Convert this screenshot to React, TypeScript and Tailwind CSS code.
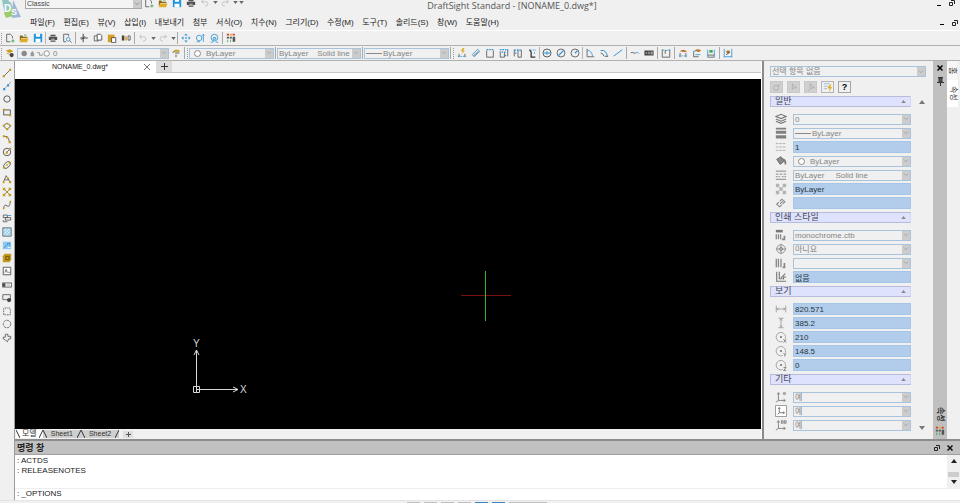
import type { ReactNode } from "react";

const INK = "#555555";
const BLUE = "#2f95d6";
const GOLD = "#c69a1c";

const glyphs: Record<string, ReactNode> = {
  new: <><path d="M2 1.500h4.500L9 4v2.500M2 1.500v9h4.500" stroke={INK} /><path d="M9.500 7.500v4M7.500 9.500h4" stroke="#3aa655" /></>,
  open: <><path d="M1 3h3l1 1.500h5V6H3l-2 4.500z" fill="#8a6a12" stroke="none" /><path d="M3 6.500h8.500L9.500 11H1z" fill="#e0aa22" stroke="none" /><path d="M6 2.500h3" stroke="#3aa655" /></>,
  save: <><path d="M1 1h10v10H1z" fill="#1e96dd" stroke="none" /><path d="M3.500 1h5v3.500h-5zM3 7h6v4H3z" fill="#fff" stroke="none" /></>,
  print: <><path d="M3 2h6v2H3zM1 4.500h10v4H1zM3 9h6v1.500H3z" fill="#505050" stroke="none" /><path d="M4 7.500h4" stroke="#ddd" /></>,
  preview: <><path d="M2 1.500h6V4M2 1.500v9h3" stroke={INK} /><circle cx="7.500" cy="7.500" r="2.200" stroke={BLUE} /><path d="M9 9l2.500 2.500" stroke={INK} /></>,
  cut: <path d="M5 1v10M1.500 6h9M7 4L3 8" stroke="#444" strokeWidth="1.200" />,
  copy: <><path d="M1.500 3.500h5v6h-5z" stroke={INK} /><path d="M5 1.500h4L10.500 3v5.500H5z" stroke="#444" fill="#fff" /></>,
  paste: <><path d="M1 2h8v9H1z" fill="#d89f1f" stroke="none" /><path d="M5.500 5.500h5v6h-5z" stroke="#444" fill="#fff" /></>,
  props: <><path d="M1 3h3v6H1z" fill="#444" stroke="none" /><path d="M5 4h2v5H5z" fill="#e0a020" stroke="none" /><path d="M8.500 3.500h2.500v5H8.500z" stroke={INK} /></>,
  undo: <path d="M4 2L2 4.500 4.500 7M2 4.500h5a2.500 2.500 0 010 5H6" stroke="#bdbdbd" />,
  redo: <path d="M8 2l2 2.500L7.500 7M10 4.500H5a2.500 2.500 0 000 5h1" stroke="#bdbdbd" />,
  pan: <path d="M6 .5L8 3H4zM6 11.500L4 9h4zM.5 6L3 4v4zM11.500 6L9 8V4zM5 5h2v2H5z" fill={BLUE} stroke="none" />,
  zoomDyn: <><circle cx="5" cy="6" r="3.300" stroke={BLUE} /><path d="M10 1.500v9M8.500 3L10 1.500 11.500 3M2 10.500h4" stroke={BLUE} /></>,
  zoomWin: <><circle cx="6.500" cy="5.500" r="4" stroke={BLUE} /><path d="M5 5.500h3v2H5zM2 11h2l2-1.500M8 11h3" stroke={BLUE} /></>,
  palette: <><path d="M1 1h2.500v2H1zM8 1h2.500v2H8z" fill="#d23c2c" stroke="none" /><path d="M4.500 1H7v2H4.500z" fill="#e0aa22" stroke="none" /><path d="M1 4.500h2.500v2H1zM4.500 4.500H7v2H4.500zM8 4.500h3v6H8z" fill={INK} stroke="none" /><path d="M2 8v3M5.500 8v3" stroke="#3aa655" /></>,
  layers: <><path d="M1 3l5-1.500L10 4 5 6z" fill={GOLD} stroke="none" /><path d="M2 6l4 2" stroke={GOLD} /><circle cx="8" cy="8.500" r="2.500" fill="#444" stroke="none" /></>,
  layerPrev: <><path d="M2 4.500h9L9 2H5z" fill={GOLD} stroke="none" /><path d="M5 6h5M6 8v3M2 6l2-2" stroke="#444" /></>,
  dimSmart: <><path d="M7 0L4.500 4H7L5.500 7.500 9.500 3H7.500L9 0z" fill="#e0aa22" stroke="none" /><path d="M2.500 7v4M9.500 7v4" stroke={INK} /><path d="M1 10h10" stroke={BLUE} strokeDasharray="2 1" /></>,
  dimAligned: <><path d="M1.500 8L8 1.500 10.500 4 4 10.500z" stroke={BLUE} /><path d="M3 9.500L9 4" stroke={INK} /></>,
  dimLinear: <><path d="M2 3v8h8V3" stroke={INK} /><path d="M2 2h8" stroke={BLUE} strokeWidth="1.500" strokeDasharray="2 1" /></>,
  dimBase: <><path d="M1.500 4v7h5V5M10.500 2v8" stroke={INK} /><path d="M1 2h10M3 5h5M8 8v3" stroke={BLUE} strokeWidth="1.500" strokeDasharray="2 1" /></>,
  dimCont: <><path d="M1.500 2v8M6 2v9h4V2" stroke={INK} /><path d="M1.500 2.500h9M2 6h3" stroke={BLUE} strokeWidth="1.500" strokeDasharray="2 1" /></>,
  dimOrd: <><path d="M3 2l2 3v6h5" stroke="#333" strokeWidth="1.500" /><path d="M4 2.500h7M9 5v3" stroke={BLUE} strokeDasharray="2 1" /></>,
  diameterH: <><circle cx="6" cy="6" r="4.800" stroke="#444" /><path d="M2 6h8M6 4v4" stroke={BLUE} strokeWidth="1.300" /></>,
  diameter: <><circle cx="6" cy="6" r="4.800" stroke={INK} /><path d="M3 9l6-6" stroke={BLUE} strokeWidth="1.300" /></>,
  radius: <><circle cx="6" cy="6" r="4.800" stroke={INK} /><path d="M6 6l3-3M6 6h1.500" stroke={BLUE} strokeWidth="1.300" /></>,
  angle: <><path d="M2.500 1v9.500H11" stroke={INK} /><path d="M3 2.500q5 1 6 7" stroke={BLUE} /></>,
  arc: <><path d="M2 3q7-1 8 7" stroke={BLUE} strokeWidth="1.200" /><path d="M2 6q3 0 4 4M7 10h4" stroke={INK} /></>,
  jog: <path d="M1 9.500L4.500 7 6 6l5-4" stroke={BLUE} strokeWidth="1.200" />,
  wave: <><path d="M1 6q1.500-2 3 0h3" stroke={INK} /><path d="M7 6l2-1 2 2" stroke={BLUE} /></>,
  tol: <><path d="M.5 3h11v6H.5z" fill="#444" stroke="none" /><path d="M2 6h2M6 4.500v3M8 5h2.500M8 7h2.500" stroke="#eee" /></>,
  center: <><path d="M1.500 2v9h9V2M5 7V3h2" stroke={INK} /><path d="M1 2.500h3M8 2.500h3" stroke={BLUE} /></>,
  dimEdit: <><path d="M2 4q4-4 9 0L8 5z" fill="#b97a34" stroke="none" /><path d="M2.500 6v5M9.500 6v5" stroke={INK} /><path d="M1 9.500h10" stroke={BLUE} strokeDasharray="2 1" /></>,
  dimText: <><path d="M3 3q4-3 8 0L8 5z" fill="#b97a34" stroke="none" /><path d="M2 5v5.500h6" stroke={INK} /><path d="M1 4h3M4 8h6" stroke={BLUE} /></>,
  dimUpdate: <><path d="M2 2v9M10 2v9" stroke={BLUE} /><path d="M4 2.500h4v3H4z" fill="#3aa655" stroke="none" /><path d="M2 8.500h8M2 11h8" stroke={INK} /></>,
  dimStyle: <><path d="M1.500 1v10M10.500 1v10M1 10.500h10" stroke={BLUE} /><path d="M4 3h4v3H4z" fill="#b97a34" stroke="none" /><path d="M4 8l4-3" stroke="#222" /></>,
  line: <><path d="M2.500 9.500l7-7" stroke={INK} /><path d="M1 8.500h2.500V11H1zM8.500 1H11v2.500H8.500z" fill={GOLD} stroke="none" /></>,
  ray: <><path d="M1 11L11 1" stroke="#999" /><path d="M1.500 8.500H4V11H1.500zM6 4h2.500v2.500H6z" fill={BLUE} stroke="none" /></>,
  circle: <circle cx="6" cy="6" r="3.800" stroke="#444" />,
  rect: <><path d="M2 3.500h8v6H2z" stroke="#444" /><path d="M1 2h2.500v2.500H1zM8.500 8.500H11V11H8.500z" fill={GOLD} stroke="none" /></>,
  arcTool: <><path d="M1.500 6q4.500-6 9 0L6 10z" stroke={INK} /><path d="M1 4.500h2.500V7H1zM8.500 4.500H11V7H8.500zM5 8.500h2.500V11H5zM5 2h2v2H5z" fill={GOLD} stroke="none" /></>,
  poly: <><path d="M2 3h4l2 3 1 4" stroke={INK} /><path d="M1 1.500h2.500V4H1zM5 3h2.500v2.500H5zM8 8.500h2.500V11H8z" fill={GOLD} stroke="none" /></>,
  circleR: <><circle cx="6" cy="6" r="4.500" stroke="#444" /><path d="M5 7l4-4" stroke={INK} /><path d="M4.500 5.500H7V8H4.500zM9 1h2v2H9z" fill={GOLD} stroke="none" /></>,
  ellipse: <><ellipse cx="6" cy="6" rx="5" ry="3" transform="rotate(-45 6 6)" stroke={INK} /><path d="M1.500 8H4v2.500H1.500zM8 2h2.500v2.500H8zM5 5h2v2H5z" fill={GOLD} stroke="none" /></>,
  spline: <><path d="M1.500 10L5 2l5 8M3.500 7h5" stroke={INK} /><path d="M1 8.500h2V11H1zM6 4h2v2H6zM8.500 8.500H11V11H8.500z" fill={GOLD} stroke="none" /></>,
  points: <><path d="M2 2l8 8M10 2l-8 8" stroke="#8c7a35" /><path d="M1 1h3v3H1zM8 1h3v3H8zM1 8h3v3H1zM8 8h3v3H8z" fill={GOLD} stroke="none" /></>,
  sketch: <><path d="M2 10q1-6 4-3t4-5" stroke={INK} /><path d="M1 9h2v2H1zM9 1h2v2H9z" fill={GOLD} stroke="none" /></>,
  table: <><path d="M1.500 2.500h5v3h-5zM4 5.500h6.500v3H4zM1.500 8.500v2h5" stroke={INK} /><path d="M7 3h4" stroke={BLUE} /></>,
  hatch: <><path d="M1 1h10v10H1z" fill="#cfe8f5" stroke="#4a5a66" /><path d="M1 4l3-3M1 8l7-7M2 11l9-9M6 11l5-5" stroke="#7fb8d6" /></>,
  gradient: <><path d="M1 2h10v9H1z" fill="#8cc8ee" stroke="none" /><path d="M2 10l6-6M6 4h3v3" stroke={BLUE} /><path d="M7 9h3" stroke="#fff" /></>,
  region: <><path d="M3 1h8v7l-2 3H1V4z" fill={GOLD} stroke="none" /><path d="M4.500 4h4v4h-4z" stroke="#5e4808" /></>,
  note: <><path d="M1.500 1.500h9v9h-9z" stroke="#444" fill="#fff" /><path d="M3.500 8L5 4l1.500 4M7.500 7.500h2" stroke={INK} /></>,
  text: <><path d="M.5 3.500h11v5H.5z" stroke={INK} /><path d="M1 4h3v4H1z" fill="#444" stroke="none" /><path d="M5.500 6h4" stroke="#aaa" /></>,
  block: <><path d="M1 2h9v6H1z" stroke={INK} /><circle cx="8.500" cy="8.500" r="2.500" fill="#444" stroke="none" /></>,
  mask: <path d="M2 10.500V3l1.500-1L5 3l1-1 1 1 1.500-1L10 3v7.500z" stroke="#555" strokeDasharray="2 1" />,
  ring: <circle cx="6" cy="6" r="4.500" stroke={INK} strokeDasharray="3 1" />,
  cloud: <path d="M4 1.500h3v2.500h3.500v3H8L6.500 10.500 4 8.500 1.500 7V5H4z" stroke={INK} />,
};

const propIcons: Record<string, ReactNode> = {
  layer: <path d="M1 4l6-2.500L13 4 7 6.500zM1 7l6 2.500L13 7M1 9.500L7 12l6-2.500" stroke="#777" strokeWidth="1.300" />,
  weight: <path d="M1 1h12v2H1zM1 4.500h12V8H1zM1 9.500h12v4H1z" fill="#808080" stroke="none" />,
  scale: <path d="M1 3h12M1 7h12M1 11h12" stroke="#a8a8a8" strokeDasharray="3 1" />,
  color: <><path d="M2 5l5-3 4 5-5 4z" fill="#8a8a8a" stroke="#666" /><path d="M9 5q4 1 3 6" stroke="#777" strokeWidth="2" /></>,
  style: <path d="M1 2.500h12M1 6h3M5.500 6h3M10 6h3M1 9h2M4 9h2M8 9h2M11 9h2M1 12h12" stroke="#777" />,
  trans: <path d="M1 1h4v4H1zM9 1h4v4H9zM5 5h4v4H5zM1 9h4v4H1zM9 9h4v4H9z" fill="#b4b4b4" stroke="none" />,
  link: <path d="M6 8L9 5M5.500 5L8 2.500l3.500 3L9 8M8 9l-2.500 2.500-3.500-3L4.500 6" stroke="#8a8a8a" strokeWidth="1.300" />,
  plotStyle: <><path d="M1 1h8v3H1z" fill="#777" stroke="none" /><path d="M1.500 6v6M4 6v6M6.500 6v6" stroke="#888" strokeWidth="1.500" /><path d="M11 8v4H8" stroke="#888" strokeWidth="2" /></>,
  plotTarget: <><circle cx="7" cy="7" r="5" stroke="#888" /><path d="M1 7h12M7 1v12" stroke="#888" /><circle cx="7" cy="7" r="2" stroke="#888" /></>,
  plotTable: <><path d="M1.500 2v10M4 2v10M7 2v10" stroke="#888" strokeWidth="1.500" /><path d="M11 7v5H9" stroke="#888" strokeWidth="2" /></>,
  plotSpace: <path d="M2 1v11h11M5 1v8h4M7 8l5-5M10 10v-3h3" stroke="#777" strokeWidth="1.300" />,
  width: <path d="M1.500 3v8M12.500 3v8M2 7h10M4 5.500L2.500 7 4 8.500M10 5.500L11.500 7 10 8.500" stroke="#999" />,
  height: <path d="M4 1.500h6M4 12.500h6M7 2v10M5.500 4L7 2.500 8.500 4M5.500 10L7 11.500 8.500 10" stroke="#999" />,
  centerX: <><path d="M12 9a5.500 5.500 0 10-3 3.200" stroke="#999" /><circle cx="7" cy="7" r="1.300" fill="#777" stroke="none" /><path d="M10 9.500l3 4M13 9.500l-3 4" stroke="#777" /></>,
  centerY: <><path d="M12 9a5.500 5.500 0 10-3 3.200" stroke="#999" /><circle cx="7" cy="7" r="1.300" fill="#777" stroke="none" /><path d="M10 9.500l1.500 2 1.500-2M11.500 11v2.500" stroke="#777" /></>,
  centerZ: <><path d="M12 9a5.500 5.500 0 10-3 3.200" stroke="#999" /><circle cx="7" cy="7" r="1.300" fill="#777" stroke="none" /><path d="M10 10h3l-3 3.500h3" stroke="#777" /></>,
  ucsIcon: <><path d="M4 2v9h8M2.500 4L4 2l1.500 2M10 9.500l2 1.500-2 1.500M4 11l-3 2" stroke="#777" /><circle cx="11" cy="3" r="2" fill="#aaa" stroke="none" /></>,
  ucsView: <><path d="M.5.5h13v13H.5z" stroke="#888" fill="#fff" /><path d="M5 3v6h6M4 4.500L5 3l1 1.500M9.500 8L11 9l-1.500 1M5 9l-2 2" stroke="#666" /></>,
  ucsOrigin: <path d="M4 2v9h8M2.500 4L4 2l1.500 2M10 9.500l2 1.500-2 1.500M4 11l-3 2M7.500 2h2v3h-2zM11 2h2v3h-2z" stroke="#777" />,
};

const menus = ["파일(F)", "편집(E)", "뷰(V)", "삽입(I)", "내보내기", "첨부", "서식(O)", "치수(N)", "그리기(D)", "수정(M)", "도구(T)", "솔리드(S)", "창(W)", "도움말(H)"];

const drawTools = ["line", "ray", "circle", "rect", "arcTool", "poly", "circleR", "ellipse", "spline", "points", "sketch", "table", "hatch", "gradient", "region", "note", "text", "block", "mask", "ring", "cloud"];

type Row = { icon: string; label: string; value: string; kind: "select" | "input"; swatch?: "line" | "dot" };

const sections: { title: string; rows: Row[] }[] = [
  {
    title: "일반",
    rows: [
      { icon: "layer", label: "도면층", value: "0", kind: "select" },
      { icon: "weight", label: "선가중치", value: "ByLayer", kind: "select", swatch: "line" },
      { icon: "scale", label: "선 축척", value: "1", kind: "input" },
      { icon: "color", label: "선 색상", value: "ByLayer", kind: "select", swatch: "dot" },
      { icon: "style", label: "선 스타일", value: "ByLayer\u00a0\u00a0\u00a0\u00a0\u00a0Solid line", kind: "select" },
      { icon: "trans", label: "투명도", value: "ByLayer", kind: "input" },
      { icon: "link", label: "하이퍼링크", value: "", kind: "input" },
    ],
  },
  {
    title: "인쇄 스타일",
    rows: [
      { icon: "plotStyle", label: "인쇄 스타일 테이블", value: "monochrome.ctb", kind: "select" },
      { icon: "plotTarget", label: "인쇄 스타일", value: "아니요", kind: "select" },
      { icon: "plotTable", label: "테이블 유형", value: "", kind: "select" },
      { icon: "plotSpace", label: "테이블 연결", value: "없음", kind: "input" },
    ],
  },
  {
    title: "보기",
    rows: [
      { icon: "width", label: "너비", value: "820.571", kind: "input" },
      { icon: "height", label: "높이", value: "385.2", kind: "input" },
      { icon: "centerX", label: "중심 X", value: "210", kind: "input" },
      { icon: "centerY", label: "중심 Y", value: "148.5", kind: "input" },
      { icon: "centerZ", label: "중심 Z", value: "0", kind: "input" },
    ],
  },
  {
    title: "기타",
    rows: [
      { icon: "ucsIcon", label: "좌표계 아이콘", value: "예", kind: "select" },
      { icon: "ucsView", label: "뷰별 좌표계", value: "예", kind: "select" },
      { icon: "ucsOrigin", label: "원점에 표시", value: "예", kind: "select" },
    ],
  },
];

function Tool({ name }: { name: string }) {
  return (
    <button type="button" aria-label={name} className="flex h-[13px] w-[14px] shrink-0 items-center justify-center">
      <svg viewBox="0 0 12 12" fill="none" className="h-[10px] w-[10px]">{glyphs[name]}</svg>
    </button>
  );
}

function Tools({ names }: { names: string[] }) {
  return <>{names.map((n) => <Tool key={n} name={n} />)}</>;
}

function More() {
  return (
    <button type="button" aria-label="more" className="flex w-[6px] shrink-0 justify-center">
      <svg viewBox="0 0 6 4" className="h-[3px] w-[5px]"><path d="M0 0h6L3 4z" fill="#666" /></svg>
    </button>
  );
}

function Sep({ tight }: { tight?: boolean }) {
  return <span className={tight ? "h-3 w-px shrink-0 bg-[#b5b5b5]" : "mx-px h-3 w-px shrink-0 bg-[#a8a8a8]"} />;
}

function Grip() {
  return <span className="mx-px h-[11px] shrink-0 border-l border-dotted border-[#999999]" />;
}

function Combo({ label, value, swatch, className = "" }: { label: string; value: string; swatch?: ReactNode; className?: string }) {
  return (
    <label className={`flex h-[11px] items-center border border-[#a9c3dc] bg-[#f0f0f0] ${className}`}>
      {swatch}
      <select disabled aria-label={label} className="h-full min-w-0 flex-1 appearance-none bg-transparent px-px text-[8px] leading-[9px] text-[#858585] opacity-100">
        <option>{value}</option>
      </select>
      <span className="flex h-full w-2 shrink-0 items-center justify-center bg-[#cccccc]">
        <svg viewBox="0 0 8 6" className="h-1 w-[6px]"><path d="M1 1l3 3 3-3" fill="none" stroke="#999" /></svg>
      </span>
    </label>
  );
}

const lineSwatch = <span className="ml-px h-px w-4 shrink-0 bg-[#8a8a8a]" />;
const dotSwatch = <span className="mx-1 h-[7px] w-[7px] shrink-0 rounded-full border border-[#8a8a8a] bg-white" />;

function PropRow({ row }: { row: Row }) {
  return (
    <div className="flex h-[14px] items-center">
      <svg viewBox="0 0 14 14" fill="none" className="mr-[6px] ml-[5px] h-3 w-3 shrink-0">{propIcons[row.icon]}</svg>
      {row.kind === "select" ? (
        <Combo label={row.label} value={row.value} className="min-w-0 flex-1"
          swatch={row.swatch === "line" ? lineSwatch : row.swatch === "dot" ? dotSwatch : undefined} />
      ) : (
        <input aria-label={row.label} defaultValue={row.value}
          className="h-3 min-w-0 flex-1 border border-[#a5c6e6] bg-[#b1cdeb] px-px text-[8px] leading-[10px] text-[#2b3540] outline-none" />
      )}
    </div>
  );
}

function WindowControls() {
  return (
    <div className="flex w-[18px] shrink-0 items-center justify-between">
      <button type="button" aria-label="최소화" className="mt-1 h-px w-1 bg-black" />
      <button type="button" aria-label="복원"><RestoreIcon /></button>
    </div>
  );
}

function RestoreIcon() {
  return (
    <svg viewBox="0 0 6 6" className="h-[6px] w-[6px]">
      <path d="M2 .5h3.500V4M.5 2.500h3v3h-3z" fill="none" stroke="#222" />
    </svg>
  );
}

function TitleBar() {
  return (
    <header className="relative flex h-[13px] items-start pl-[25px]">
      <svg viewBox="0 0 20 20" className="absolute top-0 left-px h-5 w-5">
        <path d="M1 0l6 0q6 4 5 16L4 15z" fill="#8fc6c4" />
        <path d="M12 0l8 17-9 1z" fill="#9cb8d8" />
        <path d="M3 13l8-6 1 9-7 2z" fill="#9ccb6b" />
        <text x="3" y="12" fontSize="10" fontWeight="bold" fill="#ffffff" fontFamily="Liberation Sans">D</text>
        <text x="10" y="15" fontSize="9" fontWeight="bold" fill="#ffffff" fontFamily="Liberation Sans">S</text>
      </svg>
      <label className="flex h-[9px] w-[117px] items-center border border-t-0 border-[#a8a8a8] bg-[#f4f4f4]">
        <select aria-label="작업 공간" className="h-2 min-w-0 flex-1 appearance-none px-px text-[7px] leading-[8px] text-[#444444]">
          <option>Classic</option>
        </select>
        <span className="flex h-full w-2 items-center justify-center bg-[#cccccc]">
          <svg viewBox="0 0 8 6" className="h-1 w-[6px]"><path d="M1 1l3 3 3-3" fill="none" stroke="#777" /></svg>
        </span>
      </label>
      <div className="-mt-1 flex items-center">
        <Tools names={["new", "open", "save", "print", "undo"]} />
        <More />
        <Tool name="redo" />
        <More />
        <More />
      </div>
      <h1 className="absolute inset-x-0 top-0 ml-16 text-center font-['Open_Sans',sans-serif] text-[9px] leading-[12px] text-[#555555]">
        DraftSight Standard - [NONAME_0.dwg*]
      </h1>
      <div className="mr-[5px] ml-auto"><WindowControls /></div>
    </header>
  );
}

function MenuBar() {
  return (
    <nav className="flex h-[18px] items-center border-b border-white pt-[2px] pr-[2px] pl-[30px]">
      <ul className="flex w-[469px] justify-between text-[8px] leading-[12px] whitespace-nowrap text-[#222222]">
        {menus.map((m) => <li key={m}><button type="button">{m}</button></li>)}
      </ul>
      <div className="ml-auto"><WindowControls /></div>
    </nav>
  );
}

function StandardToolbar() {
  return (
    <div role="toolbar" className="flex h-[15px] items-center border-b border-[#b0b0b0]">
      <Grip />
      <Tools names={["new", "open", "save"]} />
      <Sep tight />
      <Tools names={["print", "preview"]} />
      <Sep />
      <Tools names={["cut", "copy", "paste", "props"]} />
      <Sep />
      <Tool name="undo" />
      <More />
      <Tool name="redo" />
      <More />
      <Sep />
      <Tools names={["pan", "zoomDyn", "zoomWin"]} />
      <Sep />
      <Tool name="palette" />
    </div>
  );
}

function LayerToolbar() {
  return (
    <div role="toolbar" className="flex h-[15px] items-center border-b border-[#b0b0b0]">
      <Grip />
      <Tool name="layers" />
      <Combo label="도면층" value="0" className="w-[152px]" swatch={
        <svg viewBox="0 0 34 10" className="h-[9px] w-[34px] shrink-0">
          <circle cx="5" cy="5" r="3" fill="#8a8a8a" />
          <path d="M14 2l2 3v3h-4V5z" fill="#9a9a9a" />
          <path d="M19 4h3v3h3V5" fill="none" stroke="#999" />
          <circle cx="30" cy="5" r="3" fill="#fff" stroke="#888" />
        </svg>
      } />
      <Tool name="layerPrev" />
      <Sep />
      <Grip />
      <Combo label="색상" value="ByLayer" className="w-[85px]" swatch={dotSwatch} />
      <Sep />
      <Combo label="선 스타일" value={"ByLayer\u00a0\u00a0\u00a0\u00a0Solid line"} className="w-[84px]" />
      <Sep />
      <Combo label="선가중치" value="ByLayer" className="w-[85px]" swatch={lineSwatch} />
      <Sep />
      <Grip />
      <Tools names={["dimSmart", "dimAligned", "dimLinear", "dimBase", "dimCont", "dimOrd"]} />
      <Sep tight />
      <Tools names={["diameterH", "diameter", "radius"]} />
      <Sep tight />
      <Tools names={["angle", "arc", "jog"]} />
      <Sep />
      <Tools names={["wave", "tol"]} />
      <Sep />
      <Tool name="center" />
      <Sep />
      <Tools names={["dimEdit", "dimText", "dimUpdate"]} />
      <Sep />
      <Tool name="dimStyle" />
    </div>
  );
}

function Drawing() {
  return (
    <div className="relative min-h-0 flex-1 overflow-hidden bg-black">
      <svg viewBox="0 0 50 50" className="absolute top-[192px] left-[446px] h-[50px] w-[50px]">
        <path d="M0 24.500h50" stroke="#7a1010" />
        <path d="M24.500 0v50" stroke="#35b035" />
      </svg>
      <svg viewBox="0 0 60 60" className="absolute bottom-[31px] left-[176px] h-[60px] w-[60px]">
        <path d="M5.500 54V12M3 17l2.500-5L8 17M6 51.500h41M42 49l5 2.500-5 2.500M2.500 48.500h6v6h-6z" fill="none" stroke="#d8d8d8" />
        <text x="2" y="9" fontSize="10" fill="#d8d8d8" fontFamily="Liberation Sans">Y</text>
        <text x="49" y="55" fontSize="10" fill="#d8d8d8" fontFamily="Liberation Sans">X</text>
      </svg>
    </div>
  );
}

function DocumentArea() {
  return (
    <main className="flex min-w-0 flex-1 flex-col border-r border-white">
      <div className="flex h-[12px] shrink-0 items-start border-b border-[#c8c8c8]">
        <div className="flex h-3 w-[141px] items-center justify-between bg-white pr-[6px] pl-[37px] text-[7px] leading-[10px] text-[#222222]">
          NONAME_0.dwg*
          <button type="button" aria-label="닫기">
            <svg viewBox="0 0 6 6" className="h-[6px] w-[6px]"><path d="M0 0l6 6M6 0L0 6" stroke="#777" /></svg>
          </button>
        </div>
        <button type="button" aria-label="새 도면" className="flex h-[11px] w-4 items-center justify-center bg-[#dcdcdc]">
          <svg viewBox="0 0 7 7" className="h-[7px] w-[7px]"><path d="M3.500 0v7M0 3.500h7" stroke="#333" /></svg>
        </button>
      </div>
      <div className="h-[6px] shrink-0 bg-white" />
      <Drawing />
      <div className="flex h-[10px] shrink-0 items-center pl-px text-[7px] leading-[8px] text-[#333333]">
        <SheetTab name="모델" active />
        <SheetTab name="Sheet1" />
        <SheetTab name="Sheet2" />
        <button type="button" aria-label="시트 추가" className="ml-1 flex h-[7px] w-[10px] items-center justify-center bg-[#dedede]">
          <svg viewBox="0 0 5 5" className="h-[5px] w-[5px]"><path d="M2.500 0v5M0 2.500h5" stroke="#555" /></svg>
        </button>
      </div>
    </main>
  );
}

function SheetTab({ name, active }: { name: string; active?: boolean }) {
  return (
    <button type="button" className={active ? "flex h-2 items-center bg-white" : "flex h-2 items-center bg-[#cfcfcf]"}>
      <svg viewBox="0 0 4 8" className="h-2 w-1"><path d="M0 0l4 8" stroke="#333" /></svg>
      <span className={active ? "px-[2px] text-[8px]" : "px-1"}>{name}</span>
      <svg viewBox="0 0 4 8" className="h-2 w-1"><path d="M4 0L0 8" stroke="#333" /></svg>
    </button>
  );
}

function PropertiesPanel() {
  return (
    <aside className="flex w-[185px] shrink-0 border-l-2 border-[#8a8a8a]">
      <div className="min-w-0 flex-1 pt-[5px] pl-[6px]">
        <Combo label="선택" value="선택 항목 없음" className="mr-[7px]" />
        <div className="mt-1 flex gap-1">
          <PanelButton label="선택 추가"><circle cx="5" cy="7" r="3" stroke="#aaa" /><path d="M7 5l3-3" stroke="#aaa" /></PanelButton>
          <PanelButton label="선택"><path d="M4 2v7l2-2 3 0z" stroke="#aaa" /></PanelButton>
          <PanelButton label="스마트 선택"><path d="M5 2v7l2-2 3 0zM2 10h2" stroke="#aaa" /></PanelButton>
          <PanelButton label="빠른 선택" enabled>
            <path d="M1 2h7M1 5h5M1 8h4" stroke="#8fb8dc" /><path d="M8 3L5.500 7.500H8L7 12l4-6H8.500L10 3z" fill="#e3ac1b" />
          </PanelButton>
          <button type="button" aria-label="도움말" className="h-3 w-[13px] border border-[#a5a5a5] text-[9px] leading-[10px] font-bold text-black">?</button>
        </div>
        <div className="mt-[3px] flex">
          <div className="min-w-0 flex-1">
            {sections.map((s) => (
              <section key={s.title} className="mb-[2px]">
                <h2 className="mb-[5px] flex h-[11px] items-center justify-between border border-[#b8bcdc] border-r-[#d5d8f0] bg-[#dfe2fc] px-1 text-[9px] leading-[9px] text-[#44475a]">
                  {s.title}
                  <svg viewBox="0 0 6 4" className="h-[3px] w-[5px]"><path d="M0 4h6L3 0z" fill="#888" /></svg>
                </h2>
                {s.rows.map((r) => <PropRow key={r.label} row={r} />)}
              </section>
            ))}
          </div>
          <div className="flex w-[22px] flex-col items-center justify-between pt-1 pb-1">
            <svg viewBox="0 0 6 4" className="h-[4px] w-[6px]"><path d="M0 4h6L3 0z" fill="#777" /></svg>
            <svg viewBox="0 0 6 4" className="h-[4px] w-[6px]"><path d="M0 0h6L3 4z" fill="#777" /></svg>
          </div>
        </div>
      </div>
      <div className="flex w-[14px] shrink-0 flex-col items-center bg-[#c0c0c0] pt-[3px] pb-[3px]">
        <button type="button" aria-label="패널 닫기" className="h-[7px]">
          <svg viewBox="0 0 6 6" className="h-[6px] w-[6px]"><path d="M.5.5l5 5M5.500.5l-5 5" stroke="#000" strokeWidth="1.500" /></svg>
        </button>
        <button type="button" aria-label="고정" className="mt-[6px]">
          <svg viewBox="0 0 7 9" className="h-[9px] w-[7px]"><path d="M1 .5h5M2 1h3v4H2zM0 5.500h7M3.500 6v3" stroke="#333" fill="#555" /></svg>
        </button>
        <span className="mt-auto text-[8px] leading-[10px] font-bold text-[#333333] [text-orientation:sideways] [writing-mode:vertical-rl]">속성</span>
        <svg viewBox="0 0 12 12" fill="none" className="mt-1 h-[10px] w-[10px] shrink-0">{glyphs.palette}</svg>
      </div>
    </aside>
  );
}

function PanelButton({ label, enabled, children }: { label: string; enabled?: boolean; children: ReactNode }) {
  return (
    <button type="button" aria-label={label} disabled={!enabled}
      className={enabled ? "h-3 w-[13px] border border-[#b5b5b5]" : "h-3 w-[13px] border border-[#c8c8c8] bg-[#d0d0d0]"}>
      <svg viewBox="0 0 12 12" fill="none" className="mx-auto h-[10px] w-[10px]">{children}</svg>
    </button>
  );
}

function SideTabs() {
  return (
    <div className="flex w-[13px] shrink-0 flex-col text-[8px] leading-[10px] text-[#333333]">
      <button type="button" className="flex h-[19px] w-[10px] items-center justify-center bg-[#f7f7f7] [text-orientation:sideways] [writing-mode:vertical-rl]">홈</button>
      <button type="button" className="flex h-[27px] w-[11px] items-center justify-center bg-white [text-orientation:sideways] [writing-mode:vertical-rl]">속성</button>
    </div>
  );
}

function CommandWindow() {
  return (
    <section className="shrink-0 border-t-2 border-[#8c8c8c] bg-white text-[8px] leading-[10px] text-[#222222]">
      <div className="flex h-[14px] items-center border-b border-[#a0a0a0] bg-[#c0c0c0] pr-[7px] pl-[2px]">
        <h2 className="text-[9px] font-bold">명령 창</h2>
        <button type="button" aria-label="창 복원" className="ml-auto"><RestoreIcon /></button>
        <button type="button" aria-label="창 닫기" className="ml-[7px]">
          <svg viewBox="0 0 6 6" className="h-[6px] w-[6px]"><path d="M.5.5l5 5M5.500.5l-5 5" stroke="#111" strokeWidth="1.500" /></svg>
        </button>
      </div>
      <div className="flex h-[34px] border-b border-[#eeeeee]">
        <div className="flex-1 pt-px pl-[2px]">
          <p>: ACTDS</p>
          <p>: RELEASENOTES</p>
        </div>
        <div className="flex w-[13px] flex-col items-center justify-between bg-[#f0f0f0] py-1">
          <svg viewBox="0 0 6 4" className="h-[4px] w-[6px]"><path d="M0 4h6L3 0z" fill="#222" /></svg>
          <span className="mt-auto mb-[3px] h-[5px] w-[11px] bg-[#cdcdcd]" />
          <svg viewBox="0 0 6 4" className="h-[4px] w-[6px]"><path d="M0 0h6L3 4z" fill="#222" /></svg>
        </div>
      </div>
      <label className="flex h-[11px] pl-[2px]">
        <span className="mr-[2px]">:</span>
        <input aria-label="명령" defaultValue="_OPTIONS" className="h-[10px] min-w-0 flex-1 outline-none" />
      </label>
    </section>
  );
}

function StatusBar() {
  return (
    <footer className="flex h-[3px] shrink-0 gap-1 border-t border-[#e4e4e4] pt-px pl-[407px]">
      {[0, 1, 2, 3].map((n) => <button key={n} type="button" aria-label={`mode ${n + 1}`} className="h-px w-[13px] bg-[#bfbfbf]" />)}
      {[4, 5].map((n) => <button key={n} type="button" aria-label={`mode ${n + 1}`} className="h-px w-[13px] bg-[#3d86c6]" />)}
      <button type="button" aria-label="annotation" className="h-px w-[38px] bg-[#bfbfbf]" />
    </footer>
  );
}

export default function App() {
  return (
    <div className="flex h-screen flex-col overflow-hidden bg-[#f0f0f0] font-['Liberation_Sans','Noto_Sans_CJK_KR',sans-serif]">
      <TitleBar />
      <MenuBar />
      <StandardToolbar />
      <LayerToolbar />
      <div className="flex min-h-0 flex-1">
        <div className="w-[15px] shrink-0 border-r border-[#9c9c9c] pt-[5px]">
          <div role="toolbar" className="flex h-[278px] flex-col justify-between">
            <Tools names={drawTools} />
          </div>
        </div>
        <div className="flex min-w-0 flex-1 flex-col">
          <div className="flex min-h-0 flex-1">
            <DocumentArea />
            <PropertiesPanel />
            <SideTabs />
          </div>
          <CommandWindow />
        </div>
      </div>
      <StatusBar />
    </div>
  );
}
